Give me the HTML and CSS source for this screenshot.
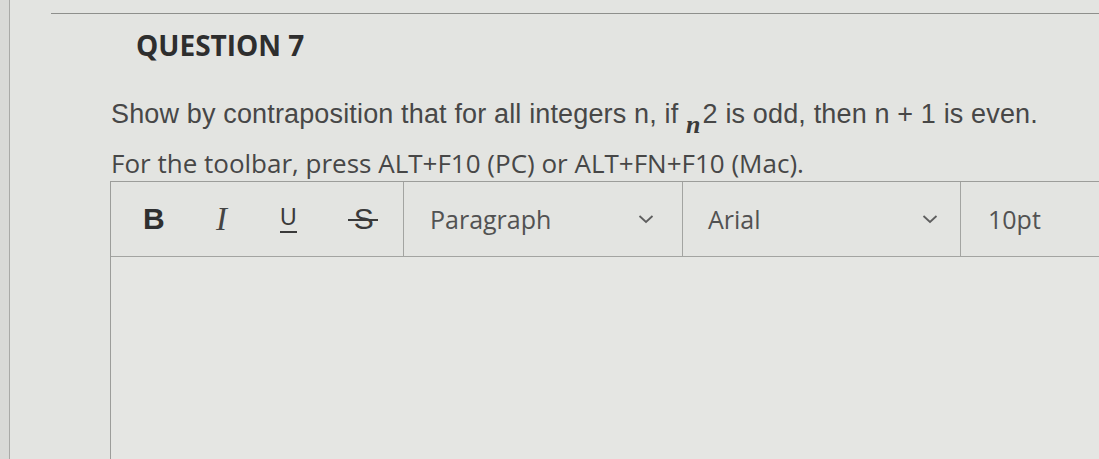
FILE: index.html
```html
<!DOCTYPE html>
<html lang="en">
<head>
<meta charset="UTF-8" />
<title>Question 7</title>
<link rel="stylesheet" href="styles.css">
</head>
<body>
<div class="page">
  <div class="rule"></div>
  <h2 class="q-title">QUESTION 7</h2>
  <p class="q-text">Show by contraposition that for all integers n, if <span class="math"><i>n</i>2</span> is odd, then n + 1 is even.</p>
  <p class="hint">For the toolbar, press ALT+F10 (PC) or ALT+FN+F10 (Mac).</p>

  <div class="editor">
    <div class="toolbar">
      <div class="cell fmt">
        <span class="btn b">B</span>
        <span class="btn i">I</span>
        <span class="btn u">U</span>
        <span class="btn s">S</span>
      </div>
      <div class="cell select para">
        <span>Paragraph</span>
        <svg class="chev" width="16" height="10" viewBox="0 0 16 10"><path d="M1.5 2 L8 8 L14.5 2" fill="none" stroke="#5e5e5e" stroke-width="1.8"/></svg>
      </div>
      <div class="cell select font">
        <span>Arial</span>
        <svg class="chev" width="16" height="10" viewBox="0 0 16 10"><path d="M1.5 2 L8 8 L14.5 2" fill="none" stroke="#5e5e5e" stroke-width="1.8"/></svg>
      </div>
      <div class="cell size">
        <span>10pt</span>
      </div>
    </div>
    <div class="body-area"></div>
  </div>
</div>
</body>
</html>
```

FILE: styles.css
```css
html, body {
  margin: 0; padding: 0; height: 100%;
  background: #d9dad7;
  overflow: hidden;
}
.page {
  margin-left: 9px;
  height: 100%;
  border-left: 1px solid #a9aaa7;
  background: #e3e4e1;
  padding-top: 13px;
  box-sizing: border-box;
  overflow: hidden;
}
.rule {
  margin-left: 41px;
  border-top: 1px solid #8e8f8c;
}
.q-title {
  margin: 15px 0 0 126px;
  font-family: 'Open Sans', sans-serif;
  font-weight: bold;
  font-size: 28px;
  line-height: 32px;
  color: #2e2e2e;
}
.q-text {
  margin: 37px 0 0 101px;
  font-family: 'Liberation Sans', Arial, sans-serif;
  font-size: 27px;
  letter-spacing: 0.15px;
  line-height: 32px;
  color: #474747;
}
.math i {
  font-family: 'Liberation Serif', serif;
  font-weight: bold;
  font-size: 26px;
  position: relative;
  top: 10px;
  margin-right: 2px;
  color: #3a3a3a;
}
.hint {
  margin: 16px 0 0 101px;
  font-family: 'Open Sans', sans-serif;
  font-size: 26px;
  line-height: 32px;
  color: #474747;
}
.editor {
  margin: 2px 0 0 100px;
  border-left: 1px solid #9c9d9a;
  border-top: 1px solid #9c9d9a;
}
.toolbar {
  display: flex;
  height: 74px;
  border-bottom: 1px solid #a3a4a1;
}
.cell {
  display: flex;
  align-items: center;
  box-sizing: border-box;
  border-right: 1px solid #a3a4a1;
  font-family: 'Open Sans', sans-serif;
  font-size: 25px;
  color: #525252;
}
.fmt {
  width: 293px;
  padding-left: 32px;
}
.btn {
  display: inline-block;
  color: #2f2f2f;
}
.btn.b {
  font-family: 'Liberation Sans', Arial, sans-serif;
  font-weight: bold;
  font-size: 30px;
  width: 73px;
}
.btn.i {
  font-family: 'Liberation Serif', serif;
  font-style: italic;
  font-size: 33px;
  width: 64px;
  color: #444;
}
.btn.u {
  font-family: 'Liberation Sans', Arial, sans-serif;
  font-size: 23px;
  line-height: 18px;
  padding-bottom: 5px;
  border-bottom: 2px solid #3a3a3a;
  margin-top: 2px;
  color: #3a3a3a;
}
.btn.s {
  font-family: 'Liberation Sans', Arial, sans-serif;
  font-size: 30px;
  position: relative;
  margin-left: 57px;
  color: #3a3a3a;
}
.btn.s::after {
  content: "";
  position: absolute;
  left: -6px; right: -4px;
  top: 50%;
  border-top: 2px solid #3a3a3a;
}
.select {
  width: 279px;
  padding: 0 28px 0 26px;
  justify-content: space-between;
}
.font {
  width: 278px;
  padding-left: 25px;
  padding-right: 22px;
}
.size {
  flex: 1;
  border-right: none;
  padding-left: 27px;
}
.body-area {
  height: 210px;
  background: #e5e6e3;
}
```
